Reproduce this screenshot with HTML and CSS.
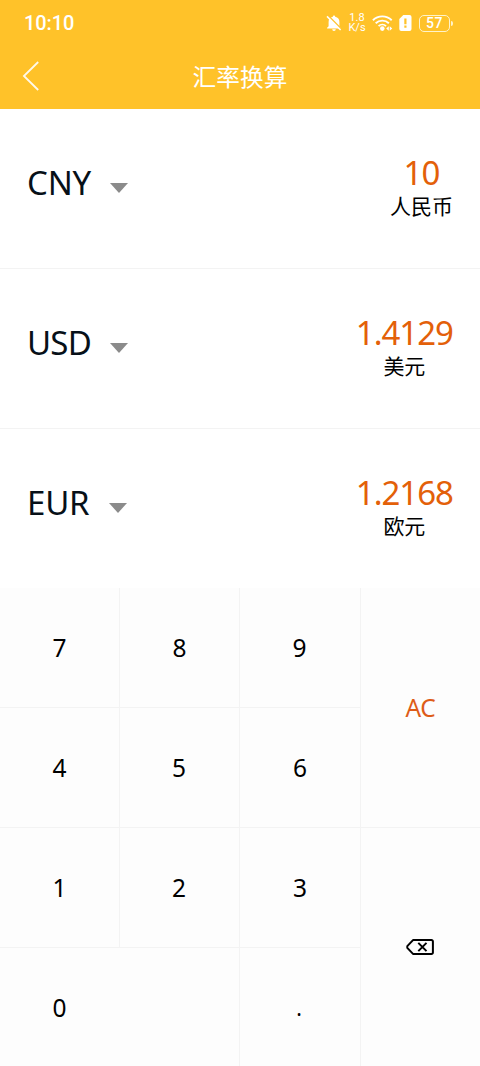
FILE: index.html
```html
<!DOCTYPE html>
<html lang="zh-CN">
<head>
<meta charset="utf-8">
<title>汇率换算</title>
<link rel="stylesheet" href="styles.css">
</head>
<body>
<header class="header">
  <div class="status">
    <span class="clock">10:10</span>
    <div class="indicators">
      <svg class="bell" width="16" height="18" viewBox="0 0 16 18"><path fill="#fff" d="M2.600 12.200V8A5.300 5.300 0 0 1 6.800 2.800a1.200 1.200 0 0 1 2.400 0A5.300 5.300 0 0 1 13.400 8v4.200l1.500 1.600v.7H1.100v-.7zM6.200 15.300h3.600a1.800 1.800 0 0 1-3.600 0z"/><path d="M1.800 1.300l14 14" stroke="#ffc229" stroke-width="1.500"/><path d="M1 2.400l13.600 13.600" stroke="#fff" stroke-width="1.500"/></svg>
      <div class="speed"><span>1.8</span><span>K/s</span></div>
      <svg class="wifi" width="21" height="18" viewBox="0 0 21 18"><g fill="none" stroke="#fff" stroke-width="1.900"><path d="M.9 6.200a13.500 13.500 0 0 1 18.800 0"/><path d="M3.700 9.300a9.400 9.400 0 0 1 13.200 0"/><path d="M6.600 12.100a5.300 5.300 0 0 1 7.400 0"/></g><circle cx="10.300" cy="14.600" r="2.300" fill="#fff"/><path fill="#fff" d="M16.800 12.200v4.600L14.200 14.500zM17.700 12.200v4.600l2.600-2.300z"/></svg>
      <svg class="sim" width="13" height="16" viewBox="0 0 13 16"><path fill="#fff" d="M4.300 0H10.500a2 2 0 0 1 2 2v12a2 2 0 0 1-2 2H2.300a2 2 0 0 1-2-2V4z"/><path d="M6.400 3.500v5.700M6.400 10.600v2.200" stroke="#ffc229" stroke-width="2.200"/></svg>
      <div class="battery"><span>57</span></div>
      <i class="battery-tip"></i>
    </div>
  </div>
  <div class="titlebar">
    <svg class="back" width="18" height="32" viewBox="0 0 18 32"><path d="M16.200 2L1.900 16l14.300 14" fill="none" stroke="#fff" stroke-opacity=".9" stroke-width="1.800"/></svg>
    <h1 class="title">汇率换算</h1>
  </div>
</header>
<main>
  <section class="row">
    <div class="currency"><span class="code">CNY</span><i class="caret"></i></div>
    <div class="amount"><span class="value">10</span><span class="name">人民币</span></div>
  </section>
  <section class="row">
    <div class="currency"><span class="code code-usd">USD</span><i class="caret"></i></div>
    <div class="amount"><span class="value">1.4129</span><span class="name">美元</span></div>
  </section>
  <section class="row last">
    <div class="currency"><span class="code code-eur">EUR</span><i class="caret"></i></div>
    <div class="amount"><span class="value">1.2168</span><span class="name">欧元</span></div>
  </section>
</main>
<div class="keypad">
  <div class="key">7</div><div class="key">8</div><div class="key">9</div>
  <div class="key clear">AC</div>
  <div class="key">4</div><div class="key">5</div><div class="key">6</div>
  <div class="key">1</div><div class="key">2</div><div class="key">3</div>
  <div class="key delete"><svg width="28" height="16" viewBox="0 0 28 16"><path d="M7 1.100H25.500a1.400 1.400 0 0 1 1.400 1.400v11a1.400 1.400 0 0 1-1.400 1.400H7L1.300 8.900V7.100z" fill="none" stroke="#000" stroke-width="2" stroke-linejoin="round"/><path d="M12.300 3.900l8.200 8.200M20.500 3.900l-8.200 8.200" stroke="#000" stroke-width="2"/></svg></div>
  <div class="key zero"><span>0</span></div><div class="key point">.</div>
</div>
</body>
</html>
```
FILE: styles.css
```css
* { box-sizing: border-box; }
body {
  margin: 0;
  width: 480px;
  height: 1066px;
  overflow: hidden;
  background: #fff;
  color: #000;
  font-family: "Noto Sans", "Noto Sans CJK SC", sans-serif;
}
.header { height: 109px; background: #ffc229; color: #fff; }
.status {
  height: 46px;
  display: flex;
  align-items: center;
  justify-content: space-between;
  padding: 0 27px 0 24px;
}
.clock { font: 500 20px/24px Roboto, sans-serif; letter-spacing: -.1px; }
.indicators { display: flex; align-items: center; }
.bell { margin-right: 1px; }
.speed {
  display: flex;
  flex-direction: column;
  align-items: center;
  width: 18px;
  margin: 0 6px 0 5px;
  font: 400 11px/10px Roboto, sans-serif;
}
.sim { margin: 0 7px 0 6px; }
.battery {
  width: 31px;
  height: 17px;
  border: 1.500px solid #fff3c9;
  border-radius: 5px;
  display: flex;
  align-items: center;
  justify-content: center;
  font: 500 14px/14px Roboto, sans-serif;
  letter-spacing: .5px;
}
.battery-tip { width: 2px; height: 5px; margin: 0 0 0 1px; background: #fff3c9; border-radius: 0 2px 2px 0; }
.titlebar {
  height: 60px;
  display: grid;
  grid-template-columns: 1fr auto 1fr;
  align-items: center;
  padding: 0 22px;
}
.title {
  margin: 0;
  font: 400 23.700px/36px "Noto Sans CJK SC", sans-serif;
}
.row {
  height: 160px;
  display: flex;
  justify-content: space-between;
  align-items: flex-start;
  padding: 45px 27px 0;
  border-bottom: 1px solid #f3f3f3;
}
.last { height: 159px; border: 0; }
.currency { display: flex; align-items: center; height: 58px; color: #071018; }
.code { font-size: 33px; line-height: 44px; width: 83px; letter-spacing: -.2px; }
.code-usd { letter-spacing: -.8px; }
.code-eur { width: 82px; }
.caret {
  margin-top: 10px;
  border: 9.500px solid transparent;
  border-top: 10px solid #8b8b8b;
  border-bottom: 0;
}
.amount { display: flex; flex-direction: column; align-items: center; }
.value { font-size: 33px; line-height: 38px; color: #e36009; letter-spacing: -1px; }
.name { font: 400 21px/26px "Noto Sans CJK SC", sans-serif; }
.keypad {
  height: 480px;
  display: grid;
  grid-template-columns: 120px 120px 121px 119px;
  grid-template-rows: repeat(4, 120px);
  background: #fdfdfd;
}
.key {
  display: flex;
  align-items: center;
  justify-content: center;
  font-size: 24.500px;
  border-right: 1px solid #f3f3f3;
  border-bottom: 1px solid #f3f3f3;
}
.key:nth-child(3n) { padding-right: 1px; }
.clear { grid-row: 1 / 3; grid-column: 4; color: #de5c18; border-right: 0; letter-spacing: -.3px; }
.delete { grid-row: 3 / 5; grid-column: 4; border: 0; padding: 0 2px 2px 0; }
.zero { grid-column: 1 / 3; justify-content: flex-start; }
.zero span { width: 119px; text-align: center; }
.point { font-size: 21px; padding: 0 2px 0 0; }
```
